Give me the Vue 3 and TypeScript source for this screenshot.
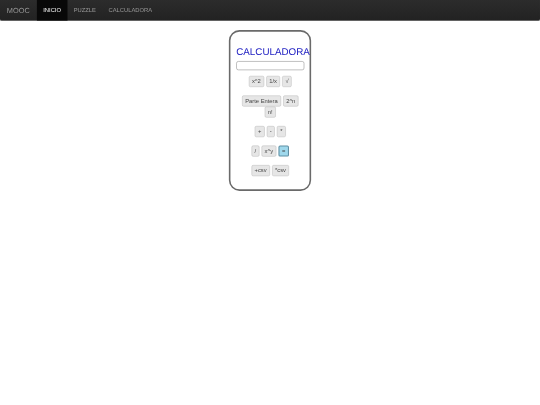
<script setup lang="ts">
const rows: { label: string; primary?: boolean }[][] = [
  [{ label: 'x^2' }, { label: '1/x' }, { label: '√' }],
  [{ label: 'Parte Entera' }, { label: '2^n' }, { label: 'n!' }],
  [{ label: '+' }, { label: '-' }, { label: '*' }],
  [{ label: '/' }, { label: 'x^y' }, { label: '=', primary: true }],
  [{ label: '+csv' }, { label: '*csv' }],
]
const links = ['Inicio', 'Puzzle', 'Calculadora']
</script>

<template>
  <div class="viewport">
    <div class="page">
      <nav class="navbar">
        <span class="brand">MOOC</span>
        <a v-for="(l, i) in links" :key="l" class="link" :class="{ active: i === 0 }">{{ l }}</a>
      </nav>
      <main class="main">
        <section class="calc">
          <h1 class="title">CALCULADORA</h1>
          <input class="display" type="text" />
          <div v-for="(row, i) in rows" :key="i" class="row">
            <button v-for="b in row" :key="b.label" class="btn" :class="{ primary: b.primary }">{{ b.label }}</button>
          </div>
        </section>
      </main>
    </div>
  </div>
</template>

<style>
html, body { margin: 0; background: #fff; }
</style>

<style scoped>
.viewport {
  width: 540px;
  height: 405px;
  overflow: hidden;
  background: #fff;
  filter: blur(0.35px);
}
.page {
  width: 1024px;
  height: 768px;
  transform: scale(0.52734);
  transform-origin: 0 0;
  text-rendering: geometricPrecision;
  font-family: "Liberation Sans", Arial, sans-serif;
}
.navbar {
  height: 40px;
  display: flex;
  align-items: stretch;
  background: linear-gradient(#2c2c2c, #222);
  border-radius: 0 0 4px 4px;
  box-sizing: border-box;
  border-bottom: 1px solid #252525;
}
.brand {
  width: 70px;
  box-sizing: border-box;
  padding-left: 13px;
  font-size: 14px;
  line-height: 40px;
  color: #999;
}
.link {
  padding: 0 12px;
  font-size: 11px;
  line-height: 40px;
  text-transform: uppercase;
  color: #999;
}
.link.active {
  background: #080808;
  color: #fff;
}
.main {
  display: flex;
  justify-content: center;
  padding-top: 17px;
}
.calc {
  width: 156px;
  height: 305px;
  box-sizing: border-box;
  border: 3px solid #6a6a6a;
  border-radius: 20px;
  padding: 0 11px;
  display: flex;
  flex-direction: column;
  align-items: flex-start;
}
.title {
  margin: 27px 0 5px;
  font-size: 18.6px;
  line-height: 24px;
  font-weight: 400;
  color: #1a1ac0;
  white-space: nowrap;
}
.display {
  width: 129px;
  height: 17px;
  box-sizing: border-box;
  border: 1.5px solid #888;
  border-radius: 4px;
  padding: 0;
  background: #fff;
  flex: none;
}
.row {
  display: flex;
  flex-wrap: wrap;
  justify-content: center;
  gap: 0 4px;
  margin-top: 11px;
  width: 129px;
}
.row + .row { margin-top: 16px; }
.btn {
  height: 21px;
  box-sizing: border-box;
  padding: 0 5px;
  font-family: inherit;
  font-size: 11px;
  line-height: 19px;
  color: #444;
  background: #e6e6e6;
  border: 1px solid #bbb;
  border-radius: 3px;
}
.btn.primary {
  background: #9fd8ec;
  border: 2px solid #5f8fa3;
}
</style>
